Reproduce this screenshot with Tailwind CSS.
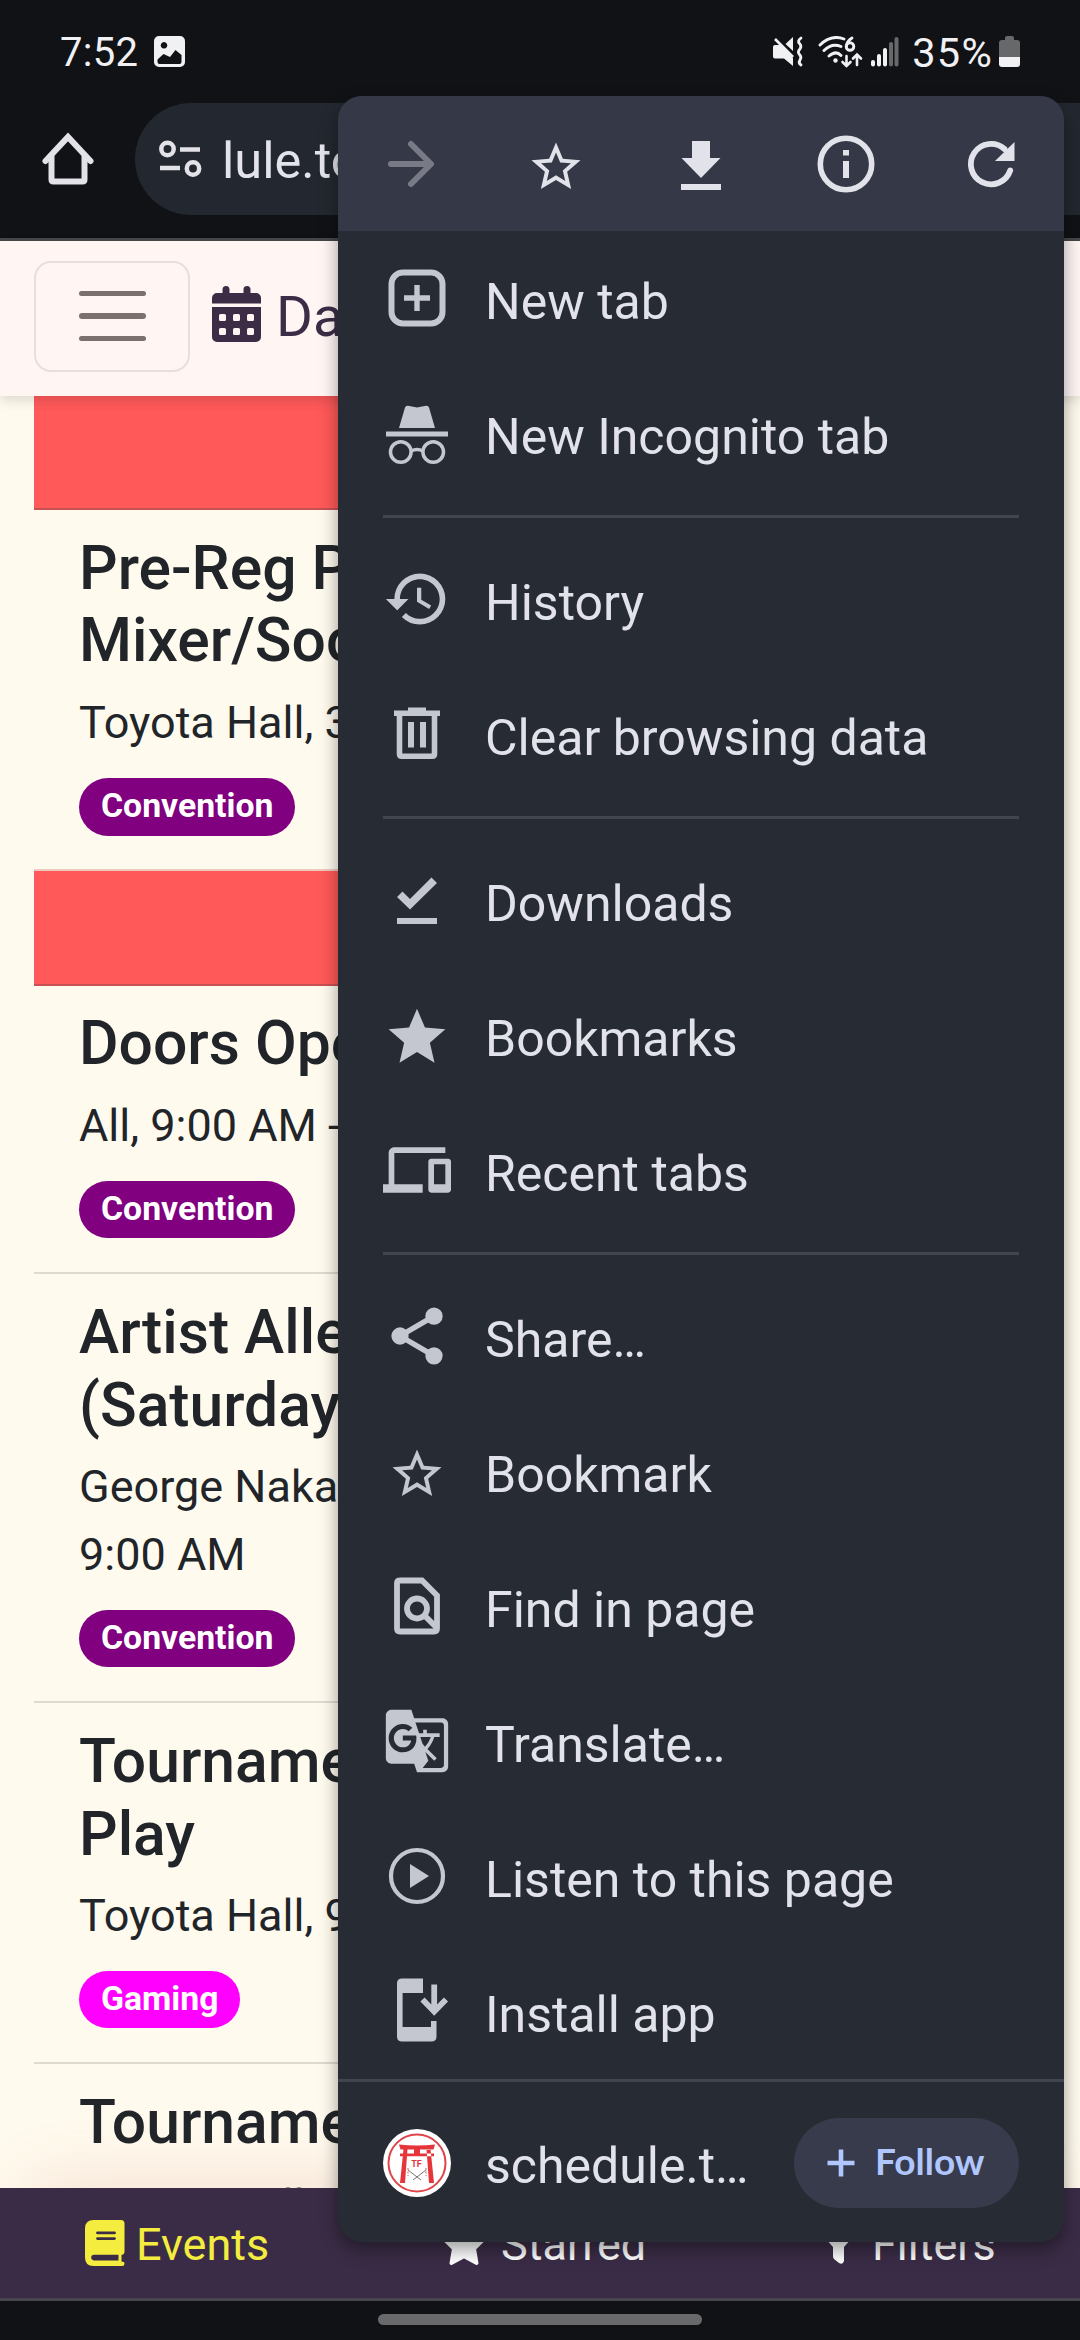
<!DOCTYPE html>
<html lang="en">
<head>
<meta charset="utf-8">
<title>Schedule</title>
<script src="https://cdn.jsdelivr.net/npm/@tailwindcss/browser@4"></script>
</head>
<body class="relative flex h-[2340px] w-[1080px] flex-col overflow-hidden bg-[#fffaee] font-['Roboto',sans-serif] text-[#212529]">

<!-- Status bar -->
<div class="flex h-[96px] shrink-0 items-center bg-[#101215] pt-[7px] pr-[60px] pl-[60px] text-[40px] text-[#f1f1f4]">
  <span class="pt-[2px] leading-none tracking-[0.300px]">7:52</span>
  <svg class="ml-[16px] h-[31px] w-[31px]" viewBox="0 0 31 31"><path fill="#f1f1f4" fill-rule="evenodd" d="M5 0h21a5 5 0 0 1 5 5v21a5 5 0 0 1-5 5H5a5 5 0 0 1-5-5V5a5 5 0 0 1 5-5zM10 6a3.3 3.3 0 1 0 .01 0zM3.500 23.500V26a2 2 0 0 0 2 2h20a2 2 0 0 0 2-2v-7l-6-5-5.500 7-6.500-3z"/></svg>
  <div class="ml-auto flex items-center">
    <svg class="h-[31px] w-[31px]" viewBox="0 0 31 31" fill="#f1f1f4"><path d="M0 11q0-2 2-2h5l13 13v8l-9-7.500H2q-2 0-2-2zM12.500 8 20 1v14z"/><path d="M2 3 20 21" stroke="#f1f1f4" stroke-width="2.600"/><path d="M28 2q-4 3-1.500 5.500T27 13q-3 3-.5 5.500T27 24q-2 3 1 5" fill="none" stroke="#f1f1f4" stroke-width="2.800" stroke-linecap="round"/></svg>
    <svg class="ml-[14px] h-[32px] w-[45px]" viewBox="0 0 45 32" fill="none" stroke="#f1f1f4" stroke-width="2.900" stroke-linecap="round"><path d="M2 9q11-11 24-6M6 14.500q8-8 17-4M11 20q7-6 12-.5"/><circle cx="17.500" cy="24.500" r="2.200" fill="#f1f1f4" stroke="none"/><path d="M34 2q-5 3-5.500 8"/><circle cx="32" cy="10.500" r="3.800"/><path d="M28.500 20v10m-4-4 4 4 4-4M39 29V18.500m-4 4 4-4 4 4" stroke-width="2.600"/></svg>
    <svg class="ml-[8px] h-[30px] w-[28px]" viewBox="0 0 28 30" fill="#f1f1f4"><rect y="23" width="4" height="6.500" rx="2"/><rect x="6" y="17" width="4" height="12.500" rx="2"/><rect x="12" y="11" width="4" height="18.500" rx="2"/><g fill="#66686a"><rect x="18" y="5" width="4" height="24.500" rx="2"/><rect x="23.500" width="4" height="29.500" rx="2"/></g></svg>
    <span class="ml-[13px] pt-[2px] text-[41.500px] leading-none tracking-[1.200px]">35%</span>
    <svg class="ml-[6px] h-[31px] w-[21px]" viewBox="0 0 21 31"><path fill="#66686a" d="M6 2q0-2 2-2h5q2 0 2 2v2h3q3 0 3 3v15H0V7q0-3 3-3h3z"/><path fill="#f1f1f4" d="M0 21h21v7q0 3-3 3H3q-3 0-3-3z"/></svg>
  </div>
</div>

<!-- Browser toolbar -->
<div class="flex h-[145px] shrink-0 items-start border-b-[3px] border-[#48484b] bg-[#101215] pt-[7px]">
  <svg class="mt-[29px] ml-[41px] h-[54px] w-[54px]" viewBox="0 0 54 54" fill="none" stroke="#e2e2e8" stroke-width="6" stroke-linecap="round" stroke-linejoin="round"><path d="M10.500 24v23.500q0 2 2 2h29q2 0 2-2V24"/><path d="M4.500 29 27 5 49.500 29" stroke-linejoin="miter"/></svg>
  <div class="ml-[40px] flex h-[112px] flex-1 items-center bg-[#23272f] rounded-l-full pl-[24px]">
    <svg class="h-[38px] w-[43px]" viewBox="0 0 43 38" fill="none" stroke="#e2e2e8" stroke-width="4.500"><circle cx="8.500" cy="9" r="6.200"/><path d="M21 9.500h20M1 28h20"/><circle cx="34" cy="28.500" r="6.200"/></svg>
    <span class="ml-[20px] pt-[4px] text-[50.600px] leading-none text-[#e2e3eb]">lule.to</span>
  </div>
</div>

<!-- Site header -->
<header class="relative z-10 flex h-[155px] shrink-0 items-center bg-[#fff6f4] pl-[34px] shadow-[0_4px_12px_rgba(0,0,0,0.14)]">
  <div class="mt-[-5px] flex h-[111px] w-[156px] flex-col items-center justify-center gap-[17px] rounded-[17px] border-2 border-[#e8dfdc]">
    <span class="h-[5.600px] w-[67px] rounded-full bg-[#7b706e]"></span>
    <span class="h-[5.600px] w-[67px] rounded-full bg-[#7b706e]"></span>
    <span class="h-[5.600px] w-[67px] rounded-full bg-[#7b706e]"></span>
  </div>
  <svg class="mt-[-9px] ml-[22px] h-[57px] w-[50px]" viewBox="0 0 50 57" fill="#3c2c45"><path d="M10.500 3.500a3.500 3.500 0 0 1 7 0V7h14V3.500a3.500 3.500 0 0 1 7 0V7H44a5 5 0 0 1 5 5v5.500H0V12a5 5 0 0 1 5-5h5.500z"/><path fill-rule="evenodd" d="M0 21h49v30a5 5 0 0 1-5 5H5a5 5 0 0 1-5-5zM8.500 28A1.500 1.500 0 0 0 7 29.500v4A1.500 1.500 0 0 0 8.500 35h4a1.500 1.500 0 0 0 1.500-1.500v-4a1.500 1.500 0 0 0-1.500-1.500zm14 0a1.500 1.500 0 0 0-1.500 1.500v4a1.500 1.500 0 0 0 1.500 1.500h4a1.500 1.500 0 0 0 1.500-1.500v-4a1.500 1.500 0 0 0-1.500-1.500zm14 0a1.500 1.500 0 0 0-1.500 1.500v4a1.500 1.500 0 0 0 1.500 1.500h4a1.500 1.500 0 0 0 1.500-1.500v-4a1.500 1.500 0 0 0-1.500-1.500zm-28 14A1.500 1.500 0 0 0 7 43.500v4A1.500 1.500 0 0 0 8.500 49h4a1.500 1.500 0 0 0 1.500-1.500v-4a1.500 1.500 0 0 0-1.500-1.500zm14 0a1.500 1.500 0 0 0-1.500 1.500v4a1.500 1.500 0 0 0 1.500 1.500h4a1.500 1.500 0 0 0 1.500-1.500v-4a1.500 1.500 0 0 0-1.500-1.500zm14 0a1.500 1.500 0 0 0-1.500 1.500v4a1.500 1.500 0 0 0 1.500 1.500h4a1.500 1.500 0 0 0 1.500-1.500v-4a1.500 1.500 0 0 0-1.500-1.500z"/></svg>
  <span class="mt-[-3px] ml-[14px] text-[56.250px] leading-none text-[#3c2c45]">Days</span>
</header>

<!-- Event list -->
<main class="mx-[34px] flex h-[1792px] shrink-0 flex-col overflow-hidden">
  <div class="h-[113.500px] shrink-0 border-b-2 border-[#c65052] bg-[#ff5959]"></div>
  <article class="shrink-0 border-b-2 border-[#eec9bd] px-[45px] pt-[23px] pb-[33.500px]">
    <h2 class="text-[60.600px] leading-[72.700px] font-medium">Pre-Reg Pickup<br>Mixer/Social</h2>
    <p class="mt-[10.750px] text-[45px] leading-[67.500px]">Toyota Hall, 3:00 PM</p>
    <div class="mt-[22px] flex"><span class="flex h-[57.400px] items-center rounded-full bg-[#800080] px-[22px] pb-[1px] text-[33.750px] font-bold text-white">Convention</span></div>
  </article>
  <div class="h-[115px] shrink-0 border-b-2 border-[#c65052] bg-[#ff5959]"></div>
  <article class="shrink-0 border-b-2 border-[#dedad0] px-[45px] pt-[22px] pb-[34px]">
    <h2 class="text-[60.600px] leading-[72.700px] font-medium">Doors Open</h2>
    <p class="mt-[11.250px] text-[45px] leading-[67.500px]">All, 9:00 AM - 5:00 PM</p>
    <div class="mt-[21.500px] flex"><span class="flex h-[57.400px] items-center rounded-full bg-[#800080] px-[22px] pb-[1px] text-[33.750px] font-bold text-white">Convention</span></div>
  </article>
  <article class="shrink-0 border-b-2 border-[#dedad0] px-[45px] pt-[23px] pb-[33.500px]">
    <h2 class="text-[60.600px] leading-[72.700px] font-medium">Artist Alley<br>(Saturday)</h2>
    <p class="mt-[10.250px] text-[45px] leading-[67.500px]">George Nakashima,<br>9:00 AM</p>
    <div class="mt-[22px] flex"><span class="flex h-[57.400px] items-center rounded-full bg-[#800080] px-[22px] pb-[1px] text-[33.750px] font-bold text-white">Convention</span></div>
  </article>
  <article class="shrink-0 border-b-2 border-[#dedad0] px-[45px] pt-[23px] pb-[33.500px]">
    <h2 class="text-[60.600px] leading-[72.700px] font-medium">Tournament<br>Play</h2>
    <p class="mt-[10.250px] text-[45px] leading-[67.500px]">Toyota Hall, 9:00 AM</p>
    <div class="mt-[22px] flex"><span class="flex h-[57.400px] items-center rounded-full bg-[#ff00ff] px-[22px] pb-[1px] text-[33.750px] font-bold text-white">Gaming</span></div>
  </article>
  <article class="shrink-0 px-[45px] pt-[23px]">
    <h2 class="text-[60.600px] leading-[72.700px] font-medium">Tournament</h2>
    <p class="mt-[12.500px] text-[45px] leading-[67.500px]">Toyota Hall, 9:00 AM</p>
  </article>
</main>

<!-- Bottom tabs -->
<nav class="flex h-[113px] shrink-0 items-center border-b-[3px] border-[#47454f] bg-[#3a2c46] text-[45px] leading-none text-white shadow-[0_-30px_70px_-30px_rgba(190,90,60,0.20)]">
  <div class="flex w-[360px] items-center gap-[11px] pl-[85px] text-[#f5ec40]">
    <svg class="h-[46px] w-[40px]" viewBox="0 0 40 46" fill="#f5ec40"><path fill-rule="evenodd" d="M8.500 0H36q3.500 0 3.500 3.500v28q0 3-3 3.500v6.500q3 0 3 2.200T37 46H8.500Q0 46 0 37.500v-29Q0 0 8.500 0zM9 34.800a2.800 2.800 0 0 0 0 5.600h24.500v-5.600zM12.500 11.500a1.400 1.400 0 0 0 0 2.800h17a1.400 1.400 0 0 0 0-2.800zm0 5.700a1.400 1.400 0 0 0 0 2.800h17a1.400 1.400 0 0 0 0-2.800z"/></svg>
    <span class="pt-[3px]">Events</span>
  </div>
  <div class="flex w-[360px] items-center gap-[12px] pl-[79px]">
    <svg class="h-[45px] w-[50px]" viewBox="2 0 20 18.500" fill="#fff" stroke="#fff" stroke-width="1.500" stroke-linejoin="round"><path d="M12 1l2.600 5.300 5.900.9-4.300 4.200 1 5.900-5.200-2.800-5.200 2.800 1-5.900-4.300-4.200 5.900-.9z"/></svg>
    <span class="pt-[3px]">Starred</span>
  </div>
  <div class="flex w-[360px] items-center gap-[11px] pl-[96px]">
    <svg class="h-[45px] w-[45px]" viewBox="0 0 45 45" fill="#fff"><path d="M3 3h39q4 2 2 5L28 26v14q-1 4-5 2l-5-4q-1-1-1-3v-9L1 8q-2-3 2-5z"/></svg>
    <span class="pt-[3px]">Filters</span>
  </div>
</nav>
<div class="flex h-[39px] shrink-0 justify-center bg-[#101215] pt-[13px]"><span class="h-[11px] w-[324px] rounded-full bg-[#69696c]"></span></div>

<!-- Overflow menu -->
<div class="absolute top-[96px] left-[338px] z-20 flex h-[2146px] w-[726px] flex-col rounded-[24px] bg-[#272b34] text-[50px] leading-none text-[#e1e2ea] shadow-[0_8px_18px_rgba(0,0,0,0.38)]">
  <div class="flex h-[135px] shrink-0 items-center rounded-t-[24px] bg-[#353846]">
    <div class="flex flex-1 justify-center"><svg class="h-[68px] w-[68px]" viewBox="-34 -34 68 68" fill="none" stroke="#787b86" stroke-width="6" stroke-linecap="round" stroke-linejoin="round"><path d="M-20 0H19M0-20 20 0 0 20"/></svg></div>
    <div class="flex flex-1 justify-center"><svg class="h-[68px] w-[68px]" viewBox="-34 -34 68 68" fill="#e1e2ea"><path transform="translate(-29.400 -26.400) scale(2.450)" d="M22 9.240l-7.190-.62L12 2 9.190 8.630 2 9.240l5.460 4.730L5.820 21 12 17.270 18.180 21l-1.630-7.030L22 9.240zM12 15.400l-3.760 2.270 1-4.280-3.320-2.880 4.380-.38L12 6.100l1.710 4.040 4.380.38-3.320 2.880 1 4.280L12 15.400z"/></svg></div>
    <div class="flex flex-1 justify-center"><svg class="h-[68px] w-[68px]" viewBox="-34 -34 68 68" fill="#e1e2ea"><path d="M-9-23H9V-6H19.500L0 14-19.500-6H-9zM-20 20h40v6h-40z"/></svg></div>
    <div class="flex flex-1 justify-center"><svg class="h-[68px] w-[68px]" viewBox="-34 -34 68 68" fill="#e1e2ea"><circle r="25.700" fill="none" stroke="#e1e2ea" stroke-width="5.600"/><path d="M-3-14h6v5.500h-6zM-3-3h6v17h-6z"/></svg></div>
    <div class="flex flex-1 justify-center"><svg class="h-[68px] w-[68px]" viewBox="-34 -34 68 68" fill="#e1e2ea"><path d="M19.200 6.500A20.200 20.200 0 1 1 13.500-15" fill="none" stroke="#e1e2ea" stroke-width="5.800" stroke-linecap="round"/><path d="M23.500-22V-3H4z"/></svg></div>
  </div>

  <div class="flex h-[135px] shrink-0 items-center gap-[34px] pl-[45px]">
    <svg class="mt-[-2px] h-[68px] w-[68px]" viewBox="-34 -34 68 68" fill="none" stroke="#c4c7d0"><rect x="-25.500" y="-25.500" width="51" height="51" rx="11.500" stroke-width="6"/><path d="M-13 0h26M0-13v26" stroke-width="5.400"/></svg>
    <span class="pt-[6px]">New tab</span>
  </div>
  <div class="flex h-[135px] shrink-0 items-center gap-[34px] pl-[45px]">
    <svg class="h-[68px] w-[68px]" viewBox="-34 -34 68 68" fill="#c4c7d0"><path d="M-12-26.500q.7-2.200 3-1.800L0-26.500 9-28.300q2.300-.4 3 1.800L18-6h-36zM-31-2.500h62v5h-62z"/><g fill="none" stroke="#c4c7d0" stroke-width="3.500"><circle cx="-16.200" cy="18" r="10.300"/><circle cx="16.200" cy="18" r="10.300"/><path d="M-6 17q6-3 12 0"/></g></svg>
    <span class="pt-[6px]">New Incognito tab</span>
  </div>
  <hr class="mx-[45px] my-[14px] shrink-0 border-t-[3px] border-[#42454f]">
  <div class="flex h-[135px] shrink-0 items-center gap-[34px] pl-[45px]">
    <svg class="mt-[-2px] h-[68px] w-[68px]" viewBox="0 0 24 24" fill="#c4c7d0"><path d="M13 3a9 9 0 0 0-9 9H1l3.890 3.890.07.14L9 12H6c0-3.870 3.130-7 7-7s7 3.130 7 7-3.130 7-7 7c-1.930 0-3.680-.79-4.940-2.060l-1.420 1.420A8.954 8.954 0 0 0 13 21a9 9 0 0 0 0-18zm-1 5v5l4.280 2.540.72-1.210-3.500-2.080V8H12z"/></svg>
    <span class="pt-[6px]">History</span>
  </div>
  <div class="flex h-[135px] shrink-0 items-center gap-[34px] pl-[45px]">
    <svg class="mt-[-2px] h-[68px] w-[68px]" viewBox="-34 -34 68 68" fill="#c4c7d0"><path d="M-9-26.500H9v3h14v5.500h-46v-5.500h14zM-9-12h6v25.500h-6zM3-12h6v25.500H3z"/><path d="M-17.500-20V20q0 2.200 2.200 2.200h30.600q2.200 0 2.200-2.200V-20" fill="none" stroke="#c4c7d0" stroke-width="5.600"/></svg>
    <span class="pt-[6px]">Clear browsing data</span>
  </div>
  <hr class="mx-[45px] my-[14px] shrink-0 border-t-[3px] border-[#42454f]">
  <div class="flex h-[135px] shrink-0 items-center gap-[34px] pl-[45px]">
    <svg class="h-[68px] w-[68px]" viewBox="-34 -34 68 68" fill="#c4c7d0"><path d="M-20-4-14.500-9.500-7-2 14.500-23.500 20-18-7 8.500zM-20 17h40v6h-40z"/></svg>
    <span class="pt-[6px]">Downloads</span>
  </div>
  <div class="flex h-[135px] shrink-0 items-center gap-[34px] pl-[45px]">
    <svg class="h-[68px] w-[68px]" viewBox="0 -.4 24 24" fill="#c4c7d0"><path d="M12 17.270L18.180 21l-1.640-7.030L22 9.240l-7.190-.61L12 2 9.190 8.630 2 9.240l5.460 4.730L5.820 21z"/></svg>
    <span class="pt-[6px]">Bookmarks</span>
  </div>
  <div class="flex h-[135px] shrink-0 items-center gap-[34px] pl-[45px]">
    <svg class="mt-[-2px] h-[68px] w-[68px]" viewBox="0 0 24 24" fill="#c4c7d0"><path d="M4 6h18V4H4c-1.100 0-2 .9-2 2v11H0v3h14v-3H4V6zm19 2h-6c-.55 0-1 .45-1 1v10c0 .55.45 1 1 1h6c.55 0 1-.45 1-1V9c0-.55-.45-1-1-1zm-1 9h-4v-7h4v7z"/></svg>
    <span class="pt-[6px]">Recent tabs</span>
  </div>
  <hr class="mx-[45px] my-[14px] shrink-0 border-t-[3px] border-[#42454f]">
  <div class="flex h-[135px] shrink-0 items-center gap-[34px] pl-[45px]">
    <svg class="mt-[-2px] h-[68px] w-[68px]" viewBox="0 0 24 24" fill="#c4c7d0"><circle cx="18" cy="5" r="3.050"/><circle cx="6" cy="12" r="3.050"/><circle cx="18" cy="19" r="3.050"/><path d="M18 5 6 12l12 7" fill="none" stroke="#c4c7d0" stroke-width="1.900"/></svg>
    <span class="pt-[6px]">Share…</span>
  </div>
  <div class="flex h-[135px] shrink-0 items-center gap-[34px] pl-[45px]">
    <svg class="mt-[-2px] h-[68px] w-[68px]" viewBox="-34 -34 68 68" fill="#c4c7d0"><path transform="translate(-29.400 -26.400) scale(2.450)" d="M22 9.240l-7.190-.62L12 2 9.190 8.630 2 9.240l5.460 4.730L5.820 21 12 17.270 18.180 21l-1.630-7.030L22 9.240zM12 15.400l-3.760 2.270 1-4.280-3.320-2.880 4.380-.38L12 6.100l1.710 4.040 4.380.38-3.320 2.880 1 4.280L12 15.400z"/></svg>
    <span class="pt-[6px]">Bookmark</span>
  </div>
  <div class="flex h-[135px] shrink-0 items-center gap-[34px] pl-[45px]">
    <svg class="mt-[-2px] h-[68px] w-[68px]" viewBox="-34 -34 68 68" fill="none" stroke="#c4c7d0" stroke-width="5.800"><path d="M-17.500-25.500H5L20-10.500V22.500q0 3-3 3h-34q-3 0-3-3v-45q0-3 3-3z"/><circle cx="0" cy="2.500" r="10"/><path d="M7.500 9.500 20 22"/></svg>
    <span class="pt-[6px]">Find in page</span>
  </div>
  <div class="flex h-[135px] shrink-0 items-center gap-[34px] pl-[45px]">
    <svg class="mt-[-2px] h-[68px] w-[68px]" viewBox="0 0 24 24" fill="#c4c7d0"><path d="M21 4H11l-1-3H3c-1.100 0-2 .9-2 2v15c0 1.100.9 2 2 2h8l1 3h9c1.100 0 2-.9 2-2V6c0-1.100-.9-2-2-2zM7 16c-2.760 0-5-2.240-5-5s2.240-5 5-5c1.350 0 2.480.5 3.350 1.300L9.030 8.570c-.38-.36-1.040-.78-2.030-.78-1.740 0-3.150 1.440-3.150 3.210S5.260 14.210 7 14.210c2.010 0 2.840-1.440 2.920-2.410H7v-1.710h4.680c.07.31.12.61.12 1.020C11.800 13.970 9.890 16 7 16zm6.170-5.420h3.700c-.43 1.250-1.110 2.430-2.050 3.470-.31-.35-.6-.72-.86-1.100l-.79-2.370zm8.330 9.920c0 .55-.45 1-1 1H14l2-2.500-1.040-3.100 3.100 3.100.92-.92-3.300-3.250.02-.02c1.130-1.250 1.930-2.690 2.400-4.220H20v-1.300h-4.530V8h-1.290v1.290h-1.440L11.460 5.500h9.040c.55 0 1 .45 1 1v14z"/></svg>
    <span class="pt-[6px]">Translate…</span>
  </div>
  <div class="flex h-[135px] shrink-0 items-center gap-[34px] pl-[45px]">
    <svg class="mt-[-2px] h-[68px] w-[68px]" viewBox="-34 -34 68 68" fill="#c4c7d0"><circle r="26" fill="none" stroke="#c4c7d0" stroke-width="4.200"/><path d="M-7-12 12 0-7 12z"/></svg>
    <span class="pt-[6px]">Listen to this page</span>
  </div>
  <div class="flex h-[135px] shrink-0 items-center gap-[34px] pl-[45px]">
    <svg class="mt-[-2px] h-[68px] w-[68px]" viewBox="-34 -34 68 68" fill="#c4c7d0"><path d="M6-32.500V-18h-20.400V16H14V10h5.500v15.500q0 5-5 5H-15q-5 0-5-5v-53q0-5 5-5z"/><path d="M17.200-26.500V0M5.500-11.500 17.200.5 29-11.500" fill="none" stroke="#c4c7d0" stroke-width="5.800"/></svg>
    <span class="pt-[6px]">Install app</span>
  </div>

  <div class="flex h-[163px] shrink-0 items-center border-t-[3px] border-[#42454f] px-[45px] pt-[2px]">
    <svg class="h-[68px] w-[68px]" viewBox="-34 -34 68 68" fill="#e5353a"><circle r="34" fill="#fff"/><circle r="28.500" fill="none" stroke="#e0444a" stroke-width="2"/><path d="M-18-18.500Q0-16.500 18-18.500L16.500-13.500h-33zM-17-9.500h34v2.700h-34zM-3-14h6v5h-6zM-13.500-14h4L-12 20h-5zM13.500-14h-4L12 20h5z"/><text x="-5.800" y="3.500" font-size="9" font-weight="700" font-family="Roboto">TF</text><path d="M-9 7 4 17M9 7-4 17" stroke="#777" stroke-width="1" fill="none"/><path d="M-9 5v8M9 5v8" stroke="#d98" stroke-width="1.500" stroke-dasharray="2 1.500"/></svg>
    <span class="ml-[34px] pt-[5px]">schedule.t…</span>
    <div class="ml-auto flex h-[90px] w-[225px] items-center rounded-full bg-[#383b4b] pl-[33px] text-[#b0c6ff]">
      <svg class="h-[28px] w-[28px]" viewBox="-14 -14 28 28" stroke="#b0c6ff" stroke-width="4.600"><path d="M-13.500 0h27M0-13.500v27"/></svg>
      <span class="ml-[20px] pb-[5px] font-['Lato',sans-serif] text-[37px] leading-none font-bold">Follow</span>
    </div>
  </div>
</div>
</body>
</html>
